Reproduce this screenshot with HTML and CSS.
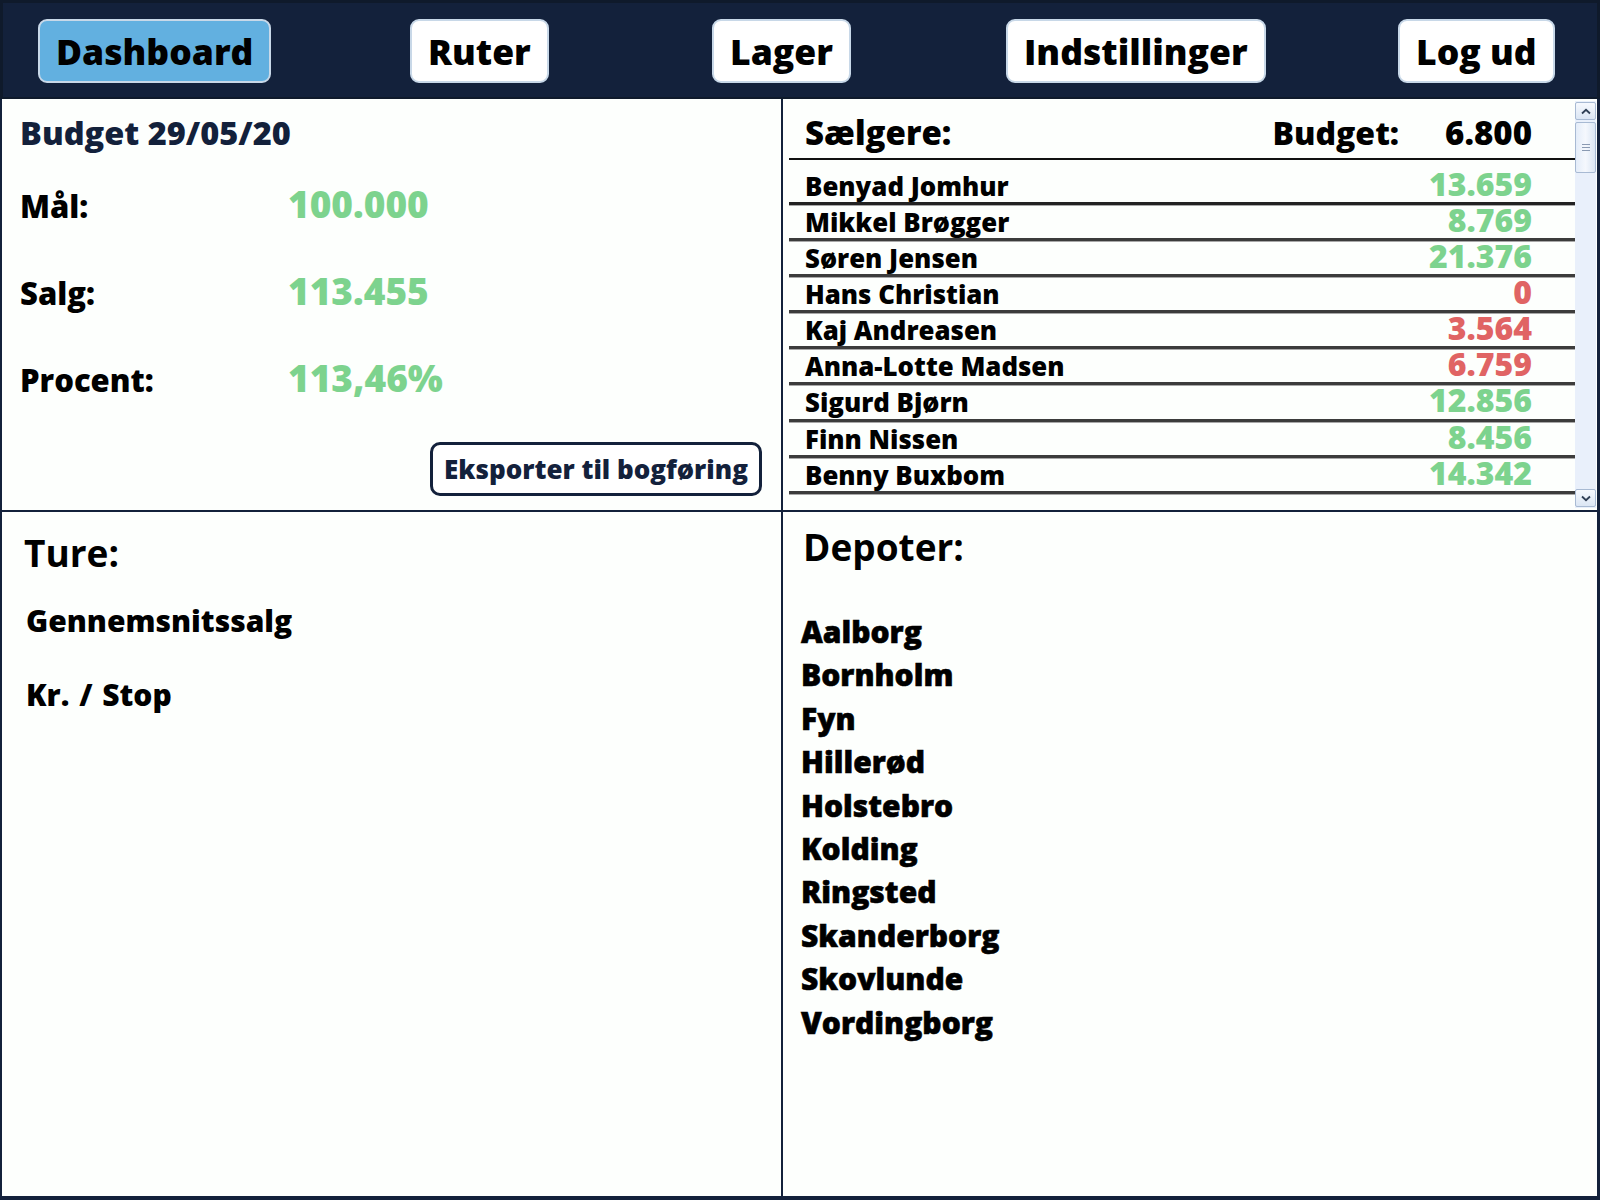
FILE: index.html
```html
<!DOCTYPE html>
<html lang="da">
<head>
<meta charset="utf-8">
<title>Dashboard</title>
<link rel="stylesheet" href="styles.css">
</head>
<body>
<div class="app">
  <nav class="nav">
    <button class="nav-btn active">Dashboard</button>
    <button class="nav-btn">Ruter</button>
    <button class="nav-btn">Lager</button>
    <button class="nav-btn">Indstillinger</button>
    <button class="nav-btn">Log ud</button>
  </nav>
  <main class="board">
    <section class="panel budget">
      <h2 class="budget-title">Budget 29/05/20</h2>
      <div class="stats">
        <span class="stat-label">Mål:</span><span class="stat-value">100.000</span>
        <span class="stat-label">Salg:</span><span class="stat-value">113.455</span>
        <span class="stat-label">Procent:</span><span class="stat-value">113,46%</span>
      </div>
      <button class="export-btn">Eksporter til bogføring</button>
    </section>

    <section class="panel sellers">
      <div class="sellers-list">
        <div class="sellers-head">
          <span class="head-title">Sælgere:</span>
          <span class="head-budget">Budget:</span>
          <span class="head-amount">6.800</span>
        </div>
        <div class="seller"><span class="seller-name">Benyad Jomhur</span><span class="seller-val good">13.659</span></div>
        <div class="seller"><span class="seller-name">Mikkel Brøgger</span><span class="seller-val good">8.769</span></div>
        <div class="seller"><span class="seller-name">Søren Jensen</span><span class="seller-val good">21.376</span></div>
        <div class="seller"><span class="seller-name">Hans Christian</span><span class="seller-val bad">0</span></div>
        <div class="seller"><span class="seller-name">Kaj Andreasen</span><span class="seller-val bad">3.564</span></div>
        <div class="seller"><span class="seller-name">Anna-Lotte Madsen</span><span class="seller-val bad">6.759</span></div>
        <div class="seller"><span class="seller-name">Sigurd Bjørn</span><span class="seller-val good">12.856</span></div>
        <div class="seller"><span class="seller-name">Finn Nissen</span><span class="seller-val good">8.456</span></div>
        <div class="seller"><span class="seller-name">Benny Buxbom</span><span class="seller-val good">14.342</span></div>
      </div>
      <div class="scrollbar">
        <div class="sb-btn">
          <svg width="10" height="7" viewBox="0 0 10 7"><path d="M1 5.5 L5 1.8 L9 5.5" fill="none" stroke="#2f3f55" stroke-width="1.8"/></svg>
        </div>
        <div class="sb-thumb"><span class="grip"></span><span class="grip"></span><span class="grip"></span></div>
        <div class="sb-track"></div>
        <div class="sb-btn">
          <svg width="10" height="7" viewBox="0 0 10 7"><path d="M1 1.5 L5 5.2 L9 1.5" fill="none" stroke="#2f3f55" stroke-width="1.8"/></svg>
        </div>
      </div>
    </section>

    <section class="panel trips">
      <h2 class="trips-title">Ture:</h2>
      <p class="trips-item first">Gennemsnitssalg</p>
      <p class="trips-item">Kr. / Stop</p>
    </section>

    <section class="panel depots">
      <h2 class="depots-title">Depoter:</h2>
      <ul class="depot-list">
        <li>Aalborg</li>
        <li>Bornholm</li>
        <li>Fyn</li>
        <li>Hillerød</li>
        <li>Holstebro</li>
        <li>Kolding</li>
        <li>Ringsted</li>
        <li>Skanderborg</li>
        <li>Skovlunde</li>
        <li>Vordingborg</li>
      </ul>
    </section>
  </main>
</div>
</body>
</html>
```

FILE: styles.css
```css
* { box-sizing: border-box; }

html, body {
  margin: 0;
  padding: 0;
  background: #fdfffd;
}

body {
  font-family: "Open Sans", "Noto Sans", "Liberation Sans", sans-serif;
  font-weight: 760;
  color: #000;
}

.app {
  width: 1600px;
  height: 1200px;
  display: grid;
  grid-template-rows: 99px 1fr;
}

/* ---------- navigation ---------- */
.nav {
  background: #13213b;
  border-top: 3px solid #0f1a2b;
  border-left: 3px solid #0f1a2b;
  border-right: 3px solid #0f1a2b;
  border-bottom: 2px solid #0f1a2b;
  display: grid;
  grid-template-columns: 372px 302px 294px 392px auto;
  align-items: center;
  justify-items: start;
  padding-left: 35px;
}

.nav-btn {
  font-family: inherit;
  font-weight: 780;
  font-size: 35.5px;
  line-height: 60px;
  height: 64px;
  padding: 0 16px;
  color: #000;
  background: #fff;
  border: 2px solid #c8d8e8;
  border-radius: 9px;
  margin-top: 2px;
}

.nav-btn.active {
  background: #62b0e0;
}

/* ---------- board ---------- */
.board {
  display: grid;
  grid-template-columns: 781px 1fr;
  grid-template-rows: 413px 1fr;
  border-left: 2px solid #13213b;
  border-right: 3px solid #13213b;
  border-bottom: 4px solid #13213b;
  min-height: 0;
}

.panel {
  min-width: 0;
  min-height: 0;
}

/* budget */
.budget {
  border-right: 2px solid #13213b;
  border-bottom: 2px solid #13213b;
  padding: 16px 19px 0 18px;
  display: flex;
  flex-direction: column;
}

.budget-title {
  margin: 0;
  font-size: 32.5px;
  font-weight: 780;
  line-height: 36px;
  color: #13213b;
}

.stats {
  margin-top: 9px;
  display: grid;
  grid-template-columns: 268px auto;
  grid-auto-rows: 87px;
  align-items: baseline;
}

.stat-label {
  font-size: 31px;
  line-height: 87px;
}

.stat-value {
  font-size: 37px;
  line-height: 87px;
  color: #7dd38e;
}

.export-btn {
  align-self: flex-end;
  margin-top: 21px;
  height: 54px;
  width: 332px;
  font-family: inherit;
  font-weight: 780;
  font-size: 26px;
  color: #13213b;
  background: #fff;
  border: 3px solid #13213b;
  border-radius: 10px;
  padding: 0;
}

/* sellers */
.sellers {
  border-bottom: 2px solid #13213b;
  display: flex;
  padding-left: 6px;
}

.sellers-list {
  flex: 1;
  min-width: 0;
}

.sellers-head {
  display: flex;
  align-items: baseline;
  height: 61px;
  padding: 9px 43px 0 16px;
  border-bottom: 2px solid #111;
  font-size: 33px;
  line-height: 50px;
}

.head-title { flex: 1; }

.head-budget { font-size: 32px; }

.head-amount { margin-left: 46px; }

.seller {
  display: flex;
  align-items: baseline;
  height: 36.1px;
  padding: 0 43px 0 16px;
  border-bottom: 3px solid #3c3c3c;
  box-shadow: 0 1px 0 #a8a8a8;
}

.sellers-head + .seller {
  height: 45px;
  padding-top: 9px;
  border-bottom-color: #222;
}

.seller-name {
  flex: 1;
  font-size: 25.8px;
  line-height: 30px;
}

.seller-val {
  font-size: 32px;
  line-height: 30px;
}

.good { color: #7dd38e; }
.bad { color: #e06464; }

/* scrollbar */
.scrollbar {
  width: 21px;
  margin: 2px 1px 2px 0;
  background: #e9f0fb;
  display: flex;
  flex-direction: column;
  gap: 2px;
  padding: 1px 0;
}

.sb-btn {
  height: 18px;
  border: 1px solid #a8bad3;
  border-radius: 2px;
  background: linear-gradient(#f6f9fe, #dbe6f4);
  display: flex;
  align-items: center;
  justify-content: center;
}

.sb-thumb {
  height: 51px;
  border: 1px solid #a8bad3;
  border-radius: 2px;
  background: linear-gradient(90deg, #e4edf9, #f5f8fd 50%, #dbe6f4);
  display: flex;
  flex-direction: column;
  align-items: center;
  justify-content: center;
  gap: 2px;
}

.grip {
  width: 8px;
  height: 1px;
  background: #8a9ab2;
}

.sb-track { flex: 1; }

/* trips */
.trips {
  border-right: 2px solid #13213b;
  padding: 19px 0 0 22px;
}

.trips-title {
  margin: 0;
  font-size: 37px;
  line-height: 44px;
}

.trips-item {
  margin: 34px 0 0 2px;
  font-size: 30px;
  line-height: 40px;
  word-spacing: 2px;
}

.trips-item.first { margin-top: 26px; }

/* depots */
.depots {
  padding: 13px 0 0 20px;
}

.depots-title {
  margin: 0;
  font-size: 37px;
  line-height: 44px;
}

.depot-list {
  list-style: none;
  margin: 41px 0 0 -2px;
  padding: 0;
}

.depot-list li {
  font-size: 30px;
  font-weight: 800;
  line-height: 43.4px;
  -webkit-text-stroke: 0.6px #000;
}
```
